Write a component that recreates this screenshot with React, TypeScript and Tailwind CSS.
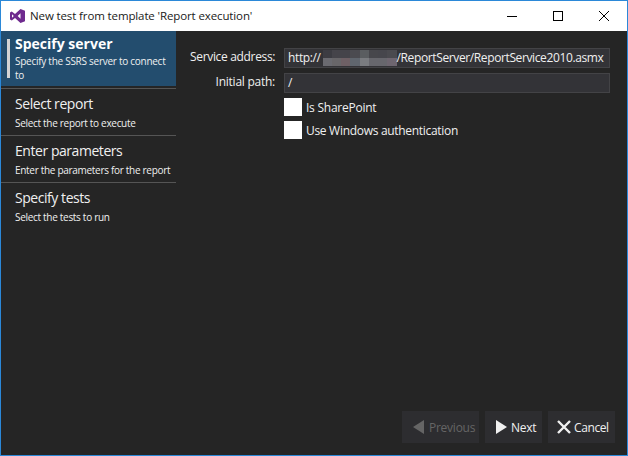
import React from "react";

const font = { fontFamily: '"Open Sans", "Noto Sans", sans-serif' };

function Step({ title, sub, active }: { title: string; sub: string; active?: boolean }) {
  if (active) {
    return (
      <div className="bg-[#234d6e] h-[55px] flex pl-[6px] pt-[8px]">
        <div className="w-[3px] h-[39px] bg-[#d4d4d4] mr-[5px] shrink-0" />
        <div className="-mt-[2px]">
          <div className="text-[14px] leading-[14px] font-bold text-white">{title}</div>
          <div className="text-[10px] leading-[14px] mt-[3px] text-[#f0f0f0] w-[160px] tracking-[-0.27px]">{sub}</div>
        </div>
      </div>
    );
  }
  return (
    <div className="h-[47px] border-t border-[#555555] pl-[14px] pt-[5px]">
      <div className="text-[14px] leading-[20px] text-[#f0f0f0] tracking-[-0.45px] whitespace-nowrap">{title}</div>
      <div className="text-[10px] leading-[14px] mt-[2px] text-[#f0f0f0] tracking-[-0.3px] whitespace-nowrap">{sub}</div>
    </div>
  );
}

const mosaic = [
  "#3c3c42", "#45444a", "#45444a", "#4b4b50", "#5a5d60", "#47474c", "#46464c", "#4a4a4f",
  "#6a6a70", "#686669", "#6e6065", "#60666e", "#7a7c80", "#67676d", "#67676d", "#6e6670",
];

export default function App() {
  return (
    <div style={font} className="w-[628px] h-[456px] border border-[#2b88d8] bg-[#252525] flex flex-col overflow-hidden">
      <div className="h-[30px] bg-white flex items-center shrink-0">
        <svg className="ml-[9px]" width="15" height="14" viewBox="0 0 15 14">
          <path
            fill="#6e2a8e"
            fillRule="evenodd"
            d="M10.5 0 L15 1.8 V12.2 L10.5 14 L5 8.9 L1.8 11.4 L0 10.5 V3.5 L1.8 2.6 L5 5.1 Z M10.5 4.2 L7.7 7 L10.5 9.8 Z M2 5.2 V8.8 L3.8 7 Z"
          />
        </svg>
        <span className="ml-[5px] text-[11.5px] text-[#1a1a1a] tracking-[-0.12px] whitespace-nowrap">New test from template 'Report execution'</span>
        <div className="ml-auto flex items-center">
          <svg width="12" height="12" viewBox="0 0 12 12" className="mr-[34px]"><path d="M1 6.5H11" stroke="#000" strokeWidth="1" /></svg>
          <svg width="12" height="12" viewBox="0 0 12 12" className="mr-[34px]"><rect x="1.5" y="1.5" width="9" height="9" fill="none" stroke="#000" /></svg>
          <svg width="12" height="12" viewBox="0 0 12 12" className="mr-[17px]"><path d="M1 1L11 11M11 1L1 11" stroke="#000" strokeWidth="1" /></svg>
        </div>
      </div>
      <div className="flex-1 flex min-h-0">
        <div className="w-[175px] shrink-0">
          <Step active title="Specify server" sub="Specify the SSRS server to connect to" />
          <div className="h-[2px]" />
          <Step title="Select report" sub="Select the report to execute" />
          <Step title="Enter parameters" sub="Enter the parameters for the report" />
          <Step title="Specify tests" sub="Select the tests to run" />
        </div>
        <div className="flex-1 flex flex-col pl-[14px] pr-[12px] pt-[17px] pb-[12px] text-[12px] text-[#f0f0f0]">
          <div className="flex items-center h-[20px]">
            <div className="w-[85px] text-right tracking-[-0.33px] -mt-[2px] whitespace-nowrap">Service address:</div>
            <div className="ml-[9px] mr-[5px] flex-1 h-[20px] bg-[#333337] border border-[#434346] flex items-center pl-[3px] tracking-[-0.38px] whitespace-nowrap overflow-hidden">
              <span>http://</span>
              <span className="grid grid-cols-8 grid-rows-2 h-[16px] w-[74px] ml-[2px] shrink-0">
                {mosaic.map((c, i) => (<span key={i} style={{ background: c }} />))}
              </span>
              <span>/ReportServer/ReportService2010.asmx</span>
            </div>
          </div>
          <div className="flex items-center h-[20px] mt-[5px]">
            <div className="w-[85px] text-right tracking-[-0.25px] -mt-[2px] whitespace-nowrap">Initial path:</div>
            <div className="ml-[9px] mr-[5px] flex-1 h-[20px] bg-[#333337] border border-[#434346] flex items-center pl-[3px]">/</div>
          </div>
          <div className="flex items-center h-[18px] mt-[5px] ml-[94px]">
            <div className="w-[18px] h-[18px] bg-white" />
            <span className="ml-[4px] pt-[2px] tracking-[-0.25px]">Is SharePoint</span>
          </div>
          <div className="flex items-center h-[18px] mt-[5px] ml-[94px]">
            <div className="w-[18px] h-[18px] bg-white" />
            <span className="ml-[4px] pt-[2px] tracking-[-0.3px]">Use Windows authentication</span>
          </div>
          <div className="mt-auto flex justify-end gap-[6px]">
            <div className="w-[77px] h-[32px] bg-[#2d2d30] flex items-center pl-[11px] text-[#656565]">
              <svg width="11" height="14" viewBox="0 0 11 14"><path d="M11 0V14L0 7Z" fill="#656565" /></svg>
              <span className="ml-[5px] pt-[2px] tracking-[-0.25px]">Previous</span>
            </div>
            <div className="w-[57px] h-[32px] bg-[#2d2d30] flex items-center pl-[11px]">
              <svg width="11" height="14" viewBox="0 0 11 14"><path d="M0 0V14L11 7Z" fill="#f0f0f0" /></svg>
              <span className="ml-[4px] pt-[2px] tracking-[-0.3px]">Next</span>
            </div>
            <div className="w-[67px] h-[32px] bg-[#2d2d30] flex items-center pl-[9px]">
              <svg width="14" height="14" viewBox="0 0 14 14"><path d="M1 1L13 13M13 1L1 13" stroke="#f0f0f0" strokeWidth="2.4" /></svg>
              <span className="ml-[3px] pt-[2px] tracking-[-0.4px]">Cancel</span>
            </div>
          </div>
        </div>
      </div>
    </div>
  );
}
